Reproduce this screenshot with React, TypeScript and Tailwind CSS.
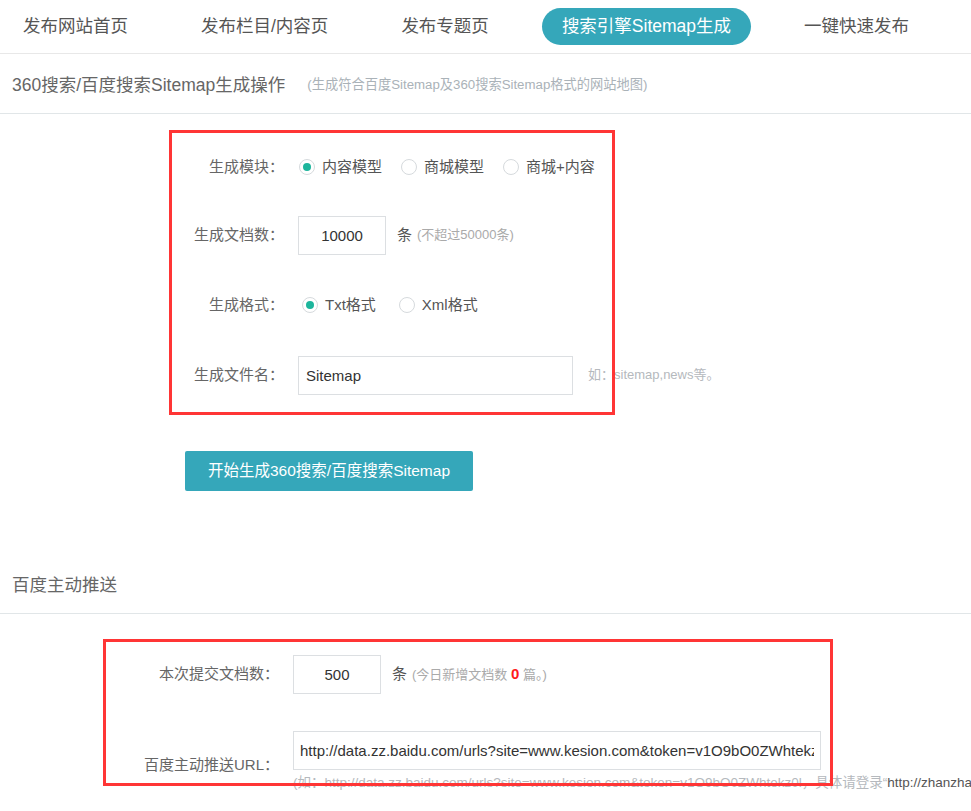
import React from "react";

const TABS = ["发布网站首页", "发布栏目/内容页", "发布专题页", "搜索引擎Sitemap生成", "一键快速发布"];
const ACTIVE = 3;

function Radio({ label, checked }: { label: string; checked?: boolean }) {
  return (
    <label className="flex items-center gap-[7px] cursor-pointer">
      <span className="flex h-[16px] w-[16px] items-center justify-center rounded-full border border-[#d6dadd] bg-white">
        {checked && <span className="h-[8px] w-[8px] rounded-full bg-[#1db59c]" />}
      </span>
      <span className="text-[15px] leading-5 text-[#555]">{label}</span>
    </label>
  );
}

export default function App() {
  return (
    <div className="min-h-screen w-full overflow-hidden bg-white text-[#555] [font-family:'Liberation_Sans','Noto_Sans_CJK_SC',sans-serif]">
      {/* Tabs */}
      <nav className="flex h-[54px] items-start gap-[33px] border-b border-[#e8e8e8] pl-[3px] pt-[8px]">
        {TABS.map((t, i) => (
          <button
            key={t}
            className={`flex h-[37px] items-center rounded-full px-5 text-[17.5px] whitespace-nowrap ${
              i === ACTIVE ? "bg-[#35a7ba] text-white" : "text-[#555]"
            }`}
          >
            {t}
          </button>
        ))}
      </nav>

      {/* Sitemap section */}
      <div className="flex h-[60px] items-center border-b border-[#e1e6e8] px-3 pt-[3px]">
        <h2 className="text-[17.5px] text-[#666]">360搜索/百度搜索Sitemap生成操作</h2>
        <span className="ml-[22px] text-[13.25px] text-[#aab2b8]">(生成符合百度Sitemap及360搜索Sitemap格式的网站地图)</span>
      </div>

      <div className="relative pt-[33px]">
        <div className="flex h-[40px] items-center">
          <span className="w-[284px] shrink-0 text-right text-[15px] text-[#666]">生成模块：</span>
          <div className="ml-[15px] flex items-center gap-[19px]">
            <Radio label="内容模型" checked />
            <Radio label="商城模型" />
            <Radio label="商城+内容" />
          </div>
        </div>

        <div className="mt-[28px] flex h-[40px] items-center">
          <span className="w-[284px] shrink-0 text-right text-[15px] text-[#666]">生成文档数：</span>
          <input
            readOnly
            value="10000"
            className="ml-[14px] h-[39px] w-[88px] border border-[#dcdfe2] text-center text-[15px] text-[#333] outline-none"
          />
          <span className="ml-[11px] text-[15px] text-[#555]">条</span>
          <span className="ml-[5px] text-[13px] text-[#aaa]">(不超过50000条)</span>
        </div>

        <div className="mt-[30px] flex h-[40px] items-center">
          <span className="w-[284px] shrink-0 text-right text-[15px] text-[#666]">生成格式：</span>
          <div className="ml-[18px] flex items-center gap-[23px]">
            <Radio label="Txt格式" checked />
            <Radio label="Xml格式" />
          </div>
        </div>

        <div className="mt-[30px] flex h-[40px] items-center">
          <span className="w-[284px] shrink-0 text-right text-[15px] text-[#666]">生成文件名：</span>
          <input
            readOnly
            value="Sitemap"
            className="ml-[14px] h-[39px] w-[275px] border border-[#dcdfe2] px-[7px] text-[15px] text-[#333] outline-none"
          />
          <span className="ml-[15px] whitespace-nowrap text-[13px] text-[#b5b9bd]">如：sitemap,news等。</span>
        </div>

        <button className="ml-[185px] mt-[56px] h-[40px] w-[288px] rounded-[2px] bg-[#35a7ba] text-[15.5px] text-white">
          开始生成360搜索/百度搜索Sitemap
        </button>

        <div className="pointer-events-none absolute left-[169px] top-[16px] h-[285px] w-[446px] border-[3px] border-[#ff3535]" />
      </div>

      {/* Baidu push section */}
      <div className="mt-[63px] flex h-[60px] items-center border-b border-[#e1e6e8] px-3 pt-[3px]">
        <h2 className="text-[17.5px] text-[#666]">百度主动推送</h2>
      </div>

      <div className="relative pt-[41px]">
        <div className="flex h-[39px] items-center">
          <span className="w-[279px] shrink-0 text-right text-[15px] text-[#666]">本次提交文档数：</span>
          <input
            readOnly
            value="500"
            className="ml-[14px] h-[39px] w-[88px] shrink-0 border border-[#dcdfe2] text-center text-[15px] text-[#333] outline-none"
          />
          <span className="ml-[11px] text-[15px] text-[#555]">条</span>
          <span className="ml-[5px] whitespace-nowrap text-[13px] text-[#aaa]">
            (今日新增文档数 <b className="text-[15px] text-[#ff1a1a]">0</b> 篇。)
          </span>
        </div>

        <div className="mt-[37px] flex items-start">
          <span className="w-[279px] shrink-0 pt-[24px] text-right text-[15px] leading-5 text-[#666]">百度主动推送URL：</span>
          <div className="ml-[14px] shrink-0">
            <input
              readOnly
              value="http://data.zz.baidu.com/urls?site=www.kesion.com&token=v1O9bO0ZWhtekz"
              className="h-[39px] w-[528px] border border-[#dcdfe2] px-[6px] text-[15px] text-[#333] outline-none"
            />
            <p className="mt-[5px] whitespace-nowrap text-[13.5px] leading-4 text-[#b5b9bd]">
              (如：http://data.zz.baidu.com/urls?site=www.kesion.com&token=v1O9bO0ZWhtekz0l，具体请登录“
              <span className="text-[#555]">http://zhanzhang.baidu.com</span>”获取)
            </p>
          </div>
        </div>

        <div className="pointer-events-none absolute left-[103px] top-[25px] h-[147px] w-[730px] border-[3px] border-[#ff3535]" />
      </div>
    </div>
  );
}
